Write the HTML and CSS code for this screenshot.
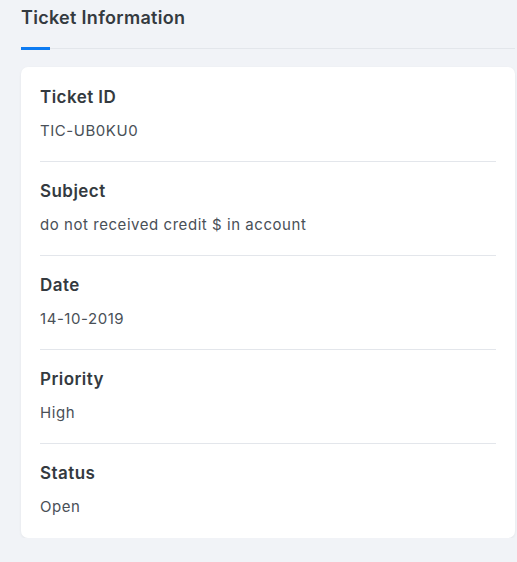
FILE: index.html
```html
<!DOCTYPE html>
<html>
<head>
<meta charset="utf-8">
<link rel="stylesheet" href="styles.css">
</head>
<body>
<div class="wrap">
  <div class="tabs">
    <div class="tab">Ticket Information</div>
  </div>
  <div class="card">
    <div class="item">
      <div class="label">Ticket ID</div>
      <div class="value">TIC-UB0KU0</div>
    </div>
    <div class="item">
      <div class="label">Subject</div>
      <div class="value">do not received credit $ in account</div>
    </div>
    <div class="item">
      <div class="label">Date</div>
      <div class="value">14-10-2019</div>
    </div>
    <div class="item">
      <div class="label">Priority</div>
      <div class="value">High</div>
    </div>
    <div class="item">
      <div class="label">Status</div>
      <div class="value">Open</div>
    </div>
  </div>
</div>
</body>
</html>
```
FILE: styles.css
```css
html, body {
  margin: 0;
  padding: 0;
  background: #f1f3f7;
  font-family: "Inter", "Noto Sans", sans-serif;
}
.wrap {
  width: 494px;
  margin-left: 21px;
}
.tabs {
  display: flex;
  border-bottom: 1px solid #e3e6eb;
  height: 48px;
}
.tab {
  font-size: 18px;
  font-weight: 600;
  letter-spacing: 0.3px;
  color: #343a40;
  line-height: 24px;
  padding-top: 6px;
  height: 41px;
  border-bottom: 3px solid #0d7bf2;
  width: 29px;
  white-space: nowrap;
}
.card {
  margin-top: 18px;
  background: #fff;
  border-radius: 7px;
  box-shadow: 0 1px 3px rgba(0,0,0,0.06);
  padding: 1px 19px 0 19px;
}
.item {
  padding: 18px 0 20px;
  border-bottom: 1px solid #e3e6eb;
}
.item:last-child { border-bottom: none; padding-bottom: 21px; }
.label {
  font-size: 17px;
  font-weight: 600;
  letter-spacing: 0.45px;
  color: #343a40;
  line-height: 22px;
}
.value {
  margin-top: 13px;
  font-size: 15px;
  letter-spacing: 0.55px;
  color: #495057;
  line-height: 20px;
}
```
